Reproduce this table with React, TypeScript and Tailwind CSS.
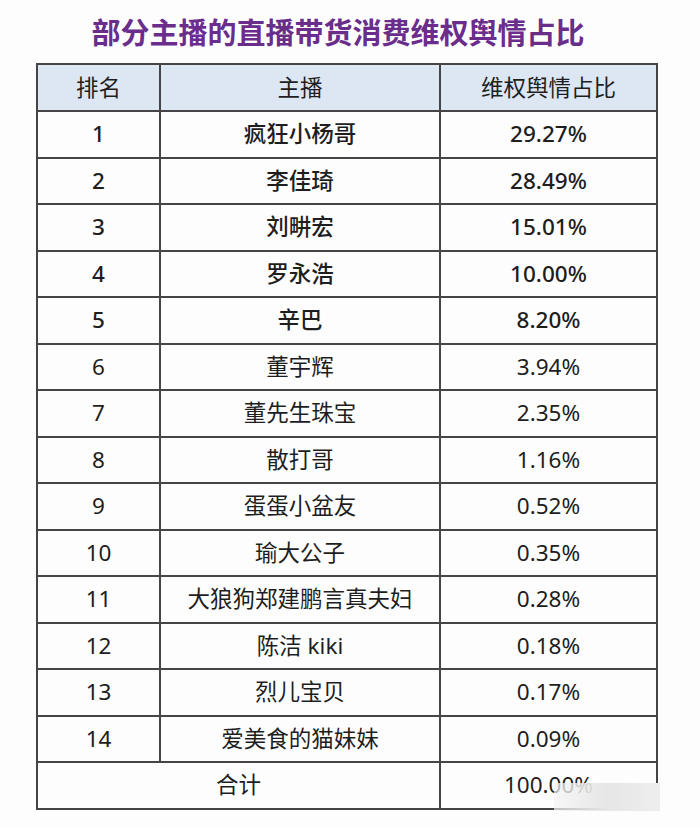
const rows: [string, string, string][] = [
  ["1", "疯狂小杨哥", "29.27%"],
  ["2", "李佳琦", "28.49%"],
  ["3", "刘畊宏", "15.01%"],
  ["4", "罗永浩", "10.00%"],
  ["5", "辛巴", "8.20%"],
  ["6", "董宇辉", "3.94%"],
  ["7", "董先生珠宝", "2.35%"],
  ["8", "散打哥", "1.16%"],
  ["9", "蛋蛋小盆友", "0.52%"],
  ["10", "瑜大公子", "0.35%"],
  ["11", "大狼狗郑建鹏言真夫妇", "0.28%"],
  ["12", "陈洁 kiki", "0.18%"],
  ["13", "烈儿宝贝", "0.17%"],
  ["14", "爱美食的猫妹妹", "0.09%"],
];

const cell = "border-2 border-[#454545] text-center align-middle";

export default function App() {
  return (
    <div
      className="min-h-[828px] w-[700px] bg-[#fdfdfd] pt-[13px] text-[#1e1e1e]"
      style={{ fontFamily: '"Noto Sans", "Noto Sans CJK SC", sans-serif' }}
    >
      <h1 className="mr-[24px] h-[40px] text-center text-[29px] font-bold leading-[40px] text-[#6a2d8c]">
        部分主播的直播带货消费维权舆情占比
      </h1>
      <div className="relative ml-[36px] mt-[10px] w-[622px]">
        <table className="w-full border-collapse text-[22.5px]">
          <thead>
            <tr className="h-[47px] bg-[#dde7f4]">
              <th className={`${cell} w-[123px] font-normal`}>排名</th>
              <th className={`${cell} w-[280px] font-normal`}>主播</th>
              <th className={`${cell} font-normal`}>维权舆情占比</th>
            </tr>
          </thead>
          <tbody>
            {rows.map(([rank, name, pct], i) => (
              <tr key={rank} className={`h-[46.5px] ${i < 5 ? "font-medium" : "font-normal"}`}>
                <td className={cell}>{rank}</td>
                <td className={cell}>{name}</td>
                <td className={cell}>{pct}</td>
              </tr>
            ))}
            <tr className="h-[46.5px]">
              <td className={cell} colSpan={2}>合计</td>
              <td className={cell}>100.00%</td>
            </tr>
          </tbody>
        </table>
        <div className="absolute bottom-[-1px] right-[-2px] h-[28px] w-[106px] bg-gradient-to-r from-[#f4f4f4]/70 via-[#e6e6e6] to-[#eeeeee]" />
      </div>
    </div>
  );
}
